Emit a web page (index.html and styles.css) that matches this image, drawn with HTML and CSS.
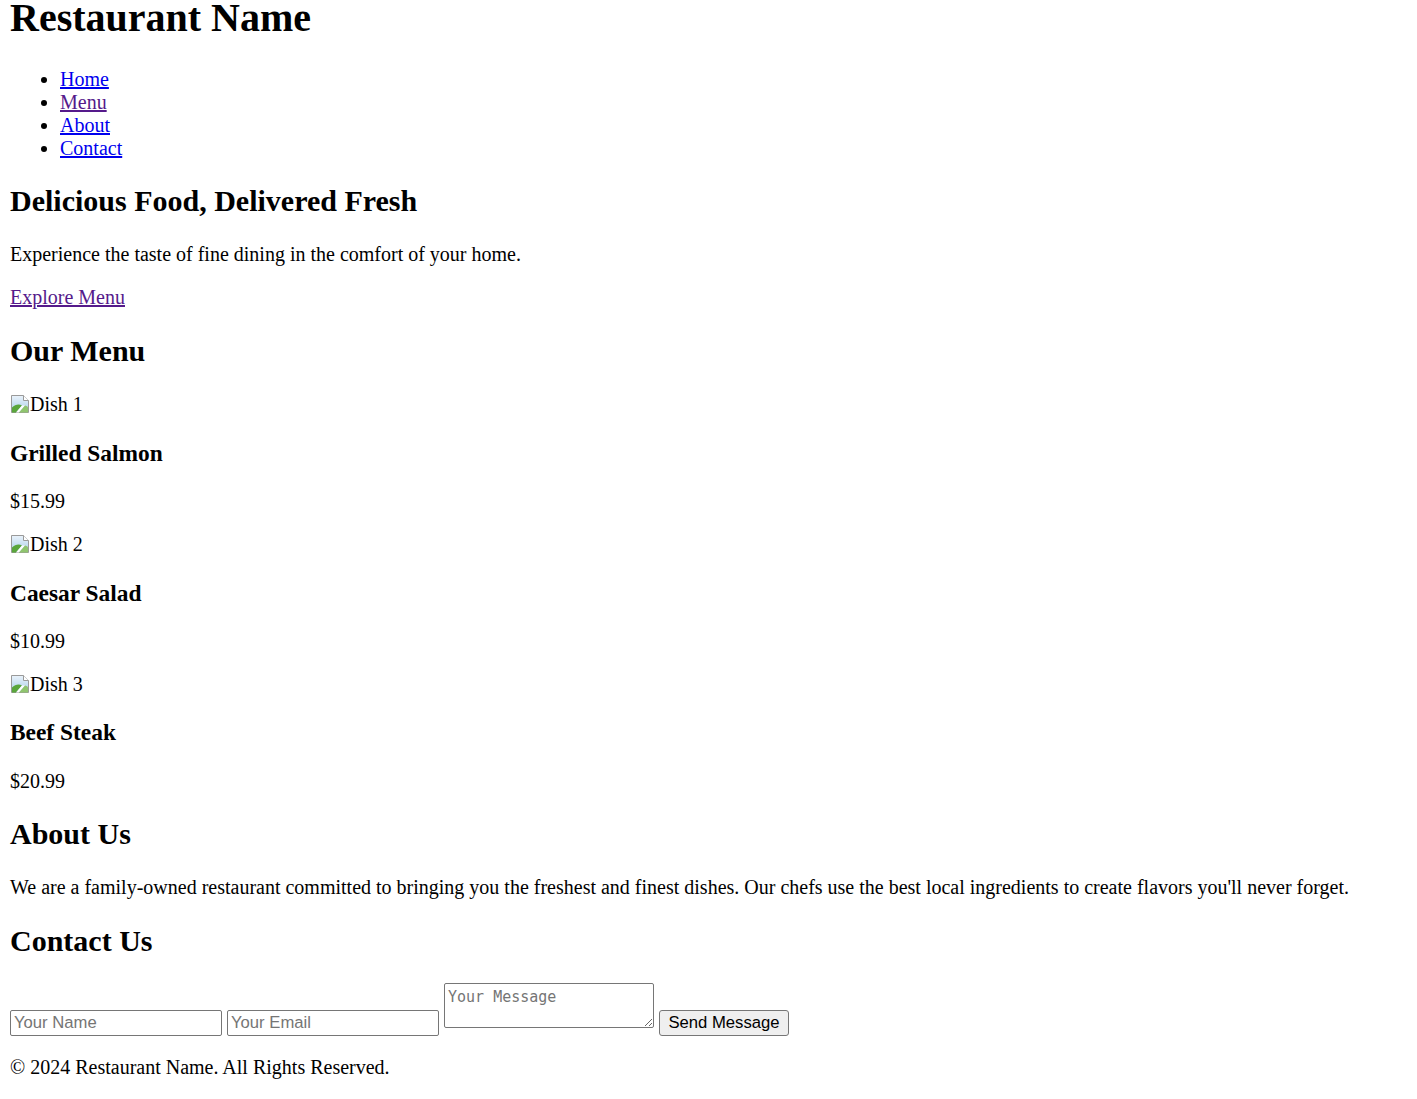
FILE: index.html
```html
<!DOCTYPE html>
<html lang="en">
<head>
<meta charset="utf-8">
<title>Restaurant Name</title>
<link rel="stylesheet" href="styles.css">
</head>
<body class="page">
<header class="site-header">
  <h1 class="site-title">Restaurant Name</h1>
  <nav>
    <ul class="nav-list">
      <li><a class="link" href="#home">Home</a></li>
      <li><a class="link visited" href="#menu">Menu</a></li>
      <li><a class="link" href="#about">About</a></li>
      <li><a class="link" href="#contact">Contact</a></li>
    </ul>
  </nav>
</header>
<section class="hero" id="home">
  <h2 class="section-title hero-title">Delicious Food, Delivered Fresh</h2>
  <p class="text">Experience the taste of fine dining in the comfort of your home.</p>
  <a class="link visited" href="#menu">Explore Menu</a>
</section>
<section class="menu" id="menu">
  <h2 class="section-title menu-title">Our Menu</h2>
  <div class="dish">
    <span class="broken-img"><svg class="broken-icon" width="20" height="20" viewBox="0 0 20 20"><defs><linearGradient id="sky1" x1="0" y1="0" x2="0" y2="1"><stop offset="0" stop-color="#eaf3fb"/><stop offset="1" stop-color="#a9cdea"/></linearGradient></defs><path d="M1.5 1.5h12l5 5v12h-17z" fill="url(#sky1)" stroke="#9a9a9a"/><path d="M13.5 1.5v5h5" fill="#ffffff" stroke="#9a9a9a"/><path d="M2 18.5v-5c3-3 7-4 10-2l-6 7z" fill="#5aa63c"/><path d="M6 18.5l6-7 3 0-6 7z" fill="#ffffff"/><path d="M9 18.5l6-7c1 0 3 1 3 2v5z" fill="#8fc46e"/></svg>Dish 1</span>
    <h3 class="dish-name">Grilled Salmon</h3>
    <p class="text">$15.99</p>
  </div>
  <div class="dish">
    <span class="broken-img"><svg class="broken-icon" width="20" height="20" viewBox="0 0 20 20"><defs><linearGradient id="sky2" x1="0" y1="0" x2="0" y2="1"><stop offset="0" stop-color="#eaf3fb"/><stop offset="1" stop-color="#a9cdea"/></linearGradient></defs><path d="M1.5 1.5h12l5 5v12h-17z" fill="url(#sky2)" stroke="#9a9a9a"/><path d="M13.5 1.5v5h5" fill="#ffffff" stroke="#9a9a9a"/><path d="M2 18.5v-5c3-3 7-4 10-2l-6 7z" fill="#5aa63c"/><path d="M6 18.5l6-7 3 0-6 7z" fill="#ffffff"/><path d="M9 18.5l6-7c1 0 3 1 3 2v5z" fill="#8fc46e"/></svg>Dish 2</span>
    <h3 class="dish-name">Caesar Salad</h3>
    <p class="text">$10.99</p>
  </div>
  <div class="dish">
    <span class="broken-img"><svg class="broken-icon" width="20" height="20" viewBox="0 0 20 20"><defs><linearGradient id="sky3" x1="0" y1="0" x2="0" y2="1"><stop offset="0" stop-color="#eaf3fb"/><stop offset="1" stop-color="#a9cdea"/></linearGradient></defs><path d="M1.5 1.5h12l5 5v12h-17z" fill="url(#sky3)" stroke="#9a9a9a"/><path d="M13.5 1.5v5h5" fill="#ffffff" stroke="#9a9a9a"/><path d="M2 18.5v-5c3-3 7-4 10-2l-6 7z" fill="#5aa63c"/><path d="M6 18.5l6-7 3 0-6 7z" fill="#ffffff"/><path d="M9 18.5l6-7c1 0 3 1 3 2v5z" fill="#8fc46e"/></svg>Dish 3</span>
    <h3 class="dish-name">Beef Steak</h3>
    <p class="text">$20.99</p>
  </div>
</section>
<section class="about" id="about">
  <h2 class="section-title about-title">About Us</h2>
  <p class="text">We are a family-owned restaurant committed to bringing you the freshest and finest dishes. Our chefs use the best local ingredients to create flavors you'll never forget.</p>
</section>
<section class="contact" id="contact">
  <h2 class="section-title contact-title">Contact Us</h2>
  <form class="contact-form">
    <input class="field" type="text" placeholder="Your Name">
    <input class="field" type="email" placeholder="Your Email">
    <textarea class="message" placeholder="Your Message"></textarea>
    <button class="send" type="button">Send Message</button>
  </form>
</section>
<footer class="site-footer">
  <p class="text">&copy; 2024 Restaurant Name. All Rights Reserved.</p>
</footer>
</body>
</html>
```

FILE: styles.css
```css
html {
  margin: 0;
  padding: 0;
}

.page {
  margin: 0 10px 10px;
  font-family: "Liberation Serif", "Times New Roman", serif;
  font-size: 20px;
  line-height: normal;
  color: #000;
  background: #fff;
}

.site-title {
  font-size: 40px;
  font-weight: bold;
  margin: -6px 0 26.8px;
}

.nav-list {
  margin: 20px 0;
  padding-left: 50px;
  list-style: disc;
}

.link {
  color: #0000ee;
  text-decoration: underline;
}

.link.visited {
  color: #551a8b;
}

.section-title {
  font-size: 30px;
  font-weight: bold;
  margin: 24.9px 0;
}

.hero-title {
  margin-top: 24px;
}

.menu-title {
  margin-bottom: 25.9px;
}

.about-title {
  margin-top: 23.9px;
}

.contact-title {
  margin-top: 25.9px;
}

.text {
  margin: 20px 0;
}

.dish-name {
  font-size: 23.4px;
  font-weight: bold;
  margin: 23.4px 0;
}

.broken-img {
  display: inline;
}

.broken-icon {
  display: inline-block;
  vertical-align: -3px;
}

.contact-form {
  margin: 0;
}

.field {
  box-sizing: border-box;
  width: 212px;
  height: 26px;
  margin: 0;
  padding: 1px 3px;
  border: 1px solid #767676;
  border-radius: 2px;
  font-family: "Liberation Sans", Arial, sans-serif;
  font-size: 16.67px;
  color: #000;
  background: #fff;
}

.field::placeholder,
.message::placeholder {
  color: #757575;
  opacity: 1;
}

.message {
  box-sizing: border-box;
  width: 210px;
  height: 45px;
  margin: 0;
  padding: 4px 3px 2px;
  border: 1px solid #767676;
  border-radius: 2px;
  font-family: "DejaVu Sans Mono", "Liberation Mono", monospace;
  font-size: 15px;
  vertical-align: baseline;
}

.send {
  box-sizing: border-box;
  width: 130px;
  height: 26px;
  margin: 0;
  padding: 1px 8px;
  border: 1px solid #767676;
  border-radius: 3px;
  background: #efefef;
  font-family: "Liberation Sans", Arial, sans-serif;
  font-size: 16.67px;
  color: #000;
}
```
